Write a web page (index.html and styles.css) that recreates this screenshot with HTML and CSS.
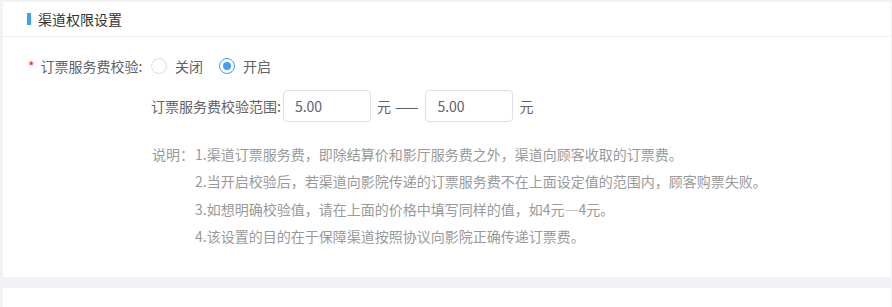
FILE: index.html
```html
<!DOCTYPE html>
<html lang="zh-CN">
<head>
    <meta charset="UTF-8">
    <meta name="viewport" content="width=device-width, initial-scale=1.0">
    <title>渠道权限设置</title>
    <link rel="stylesheet" href="styles.css">
</head>
<body>
    <div class="card">
        <div class="card-header">
            <span class="bar"></span>
            <span class="title">渠道权限设置</span>
        </div>
        <div class="card-body">
            <div class="form-item">
                <label class="form-label"><span class="required">*</span>订票服务费校验:</label>
                <div class="radio-group">
                    <label class="radio"><span class="radio-dot"></span>关闭</label>
                    <label class="radio checked"><span class="radio-dot"></span>开启</label>
                </div>
            </div>
            <div class="range-row">
                <span class="range-label">订票服务费校验范围:</span>
                <input class="input" type="text" value="5.00">
                <span class="unit">元</span>
                <span class="dash">——</span>
                <input class="input" type="text" value="5.00">
                <span class="unit">元</span>
            </div>
            <div class="notes">
                <span class="notes-title">说明：</span>
                <div class="notes-list">
                    <p>1.渠道订票服务费，即除结算价和影厅服务费之外，渠道向顾客收取的订票费。</p>
                    <p>2.当开启校验后，若渠道向影院传递的订票服务费不在上面设定值的范围内，顾客购票失败。</p>
                    <p>3.如想明确校验值，请在上面的价格中填写同样的值，如4元—4元。</p>
                    <p>4.该设置的目的在于保障渠道按照协议向影院正确传递订票费。</p>
                </div>
            </div>
        </div>
    </div>
    <div class="card card-next"></div>
</body>
</html>
```

FILE: styles.css
```css
body {
    margin: 0;
    height: 100vh;
    box-sizing: border-box;
    padding: 2px 1px 0 3px;
    background-color: #f0f2f5;
    font-family: "Noto Sans CJK SC", "Noto Sans", sans-serif;
    font-size: 14px;
    color: #606266;
    overflow: hidden;
}

.card {
    background-color: #fff;
    height: 275px;
}

.card-next {
    margin-top: 11px;
    height: 19px;
}

.card-header {
    display: flex;
    align-items: center;
    height: 34px;
    padding-left: 24px;
    border-bottom: 1px solid #eef0f3;
}

.bar {
    width: 4px;
    height: 12px;
    background-color: #409eff;
    margin-right: 7px;
}

.title {
    color: #333;
    line-height: 20px;
}

.card-body {
    padding-top: 13px;
}

.form-item {
    display: flex;
    align-items: center;
    height: 32px;
}

.form-label {
    width: 148px;
    flex-shrink: 0;
    box-sizing: border-box;
    padding-left: 25px;
    white-space: nowrap;
    line-height: 20px;
}

.required {
    color: #f5222d;
    margin-right: 6px;
}

.radio-group {
    display: flex;
    align-items: center;
}

.radio {
    display: flex;
    align-items: center;
    margin-right: 16px;
    line-height: 20px;
}

.radio-dot {
    width: 16px;
    height: 16px;
    box-sizing: border-box;
    border: 1px solid #dcdfe6;
    border-radius: 50%;
    margin-right: 8px;
    position: relative;
}

.radio.checked .radio-dot {
    border-color: #409eff;
}

.radio.checked .radio-dot::after {
    content: "";
    position: absolute;
    top: 3px;
    left: 3px;
    width: 8px;
    height: 8px;
    border-radius: 50%;
    background-color: #409eff;
}

.range-row {
    display: flex;
    align-items: center;
    margin-top: 8px;
    padding-left: 148px;
    height: 32px;
    line-height: 20px;
}

.range-label {
    margin-right: 2px;
}

.input {
    width: 88px;
    height: 32px;
    box-sizing: border-box;
    border: 1px solid #dcdfe6;
    border-radius: 4px;
    padding: 0 11px;
    font-family: "Noto Sans CJK SC", "Noto Sans", sans-serif;
    font-size: 14px;
    color: #606266;
    outline: none;
}

.unit {
    margin-left: 6px;
}

.dash {
    margin: 0 6px 0 4px;
    letter-spacing: 1px;
}

.notes {
    display: flex;
    margin-top: 19px;
    padding-left: 149px;
    color: #999;
    line-height: 27.33px;
}

.notes-title {
    width: 43px;
    flex-shrink: 0;
}

.notes-list p {
    margin: 0;
}
```
